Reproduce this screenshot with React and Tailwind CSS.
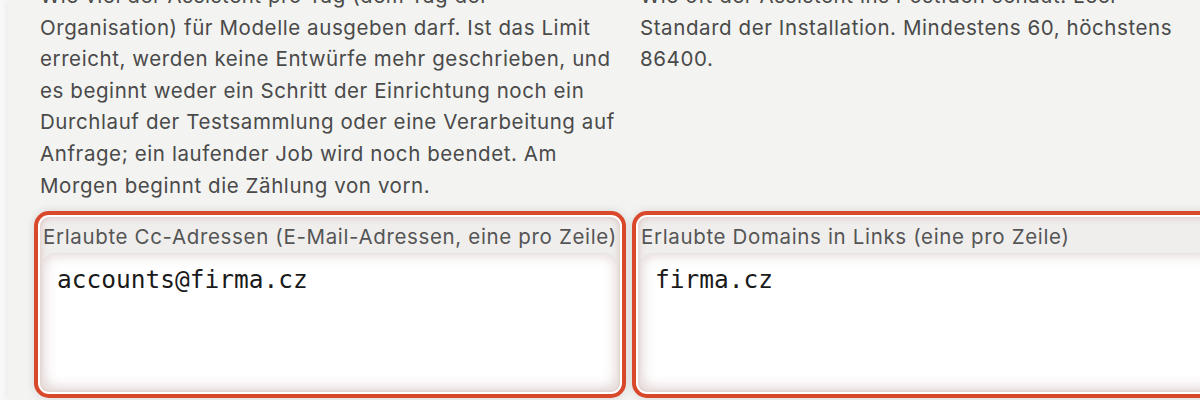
export default function App() {
  const fields = [
    { label: 'Erlaubte Cc-Adressen (E-Mail-Adressen, eine pro Zeile)', value: 'accounts@firma.cz' },
    { label: 'Erlaubte Domains in Links (eine pro Zeile)', value: 'firma.cz' },
  ];

  return (
    <div className="flex h-[400px] w-[1200px] overflow-hidden bg-[#f8f8f8] font-['Inter',sans-serif] text-[#4a4a4a]">
      <div className="w-[8px] shrink-0" />
      <main className="flex-1 bg-[#f3f3f1] pl-[32px] shadow-[-3px_0_5px_rgba(0,0,0,0.04)]">
        <div className="-mt-[20px] grid grid-cols-[580px_580px] gap-x-[18px] gap-y-[16px]">
          <p className="text-[20.5px] leading-[31.6px] tracking-[0.58px]">
            Wie viel der Assistent pro Tag (dem Tag der
            <br />
            Organisation) für Modelle ausgeben darf. Ist das Limit
            <br />
            erreicht, werden keine Entwürfe mehr geschrieben, und
            <br />
            es beginnt weder ein Schritt der Einrichtung noch ein
            <br />
            Durchlauf der Testsammlung oder eine Verarbeitung auf
            <br />
            Anfrage; ein laufender Job wird noch beendet. Am
            <br />
            Morgen beginnt die Zählung von vorn.
          </p>
          <p className="pl-[2px] text-[20.5px] leading-[31.6px] tracking-[0.58px]">
            Wie oft der Assistent ins Postfach schaut. Leer =
            <br />
            Standard der Installation. Mindestens 60, höchstens
            <br />
            86400.
          </p>

          {fields.map((f) => (
            <div
              key={f.label}
              className="flex h-[175px] flex-col rounded-[9px] bg-[#efeeed] px-[3px] pb-[3px] shadow-[0_0_0_2px_#ffffff,0_0_0_6px_#d9482b,0_0_10px_6px_rgba(0,0,0,0.12),inset_0_0_7px_rgba(170,90,80,0.35)]"
            >
              <label className="flex h-[36px] shrink-0 items-center whitespace-nowrap pt-[5px] text-[20.5px] tracking-[0.65px] text-[#555555]">
                {f.label}
              </label>
              <textarea
                readOnly
                defaultValue={f.value}
                className="flex-1 resize-none rounded-[10px] border-t border-[#e4e4e4] bg-white px-[14px] py-[10px] font-['DejaVu_Sans_Mono',monospace] text-[24.5px] leading-[32px] text-[#1a1a1a] shadow-[inset_0_0_14px_rgba(150,100,100,0.32)] outline-none"
              />
            </div>
          ))}
        </div>
      </main>
    </div>
  );
}
